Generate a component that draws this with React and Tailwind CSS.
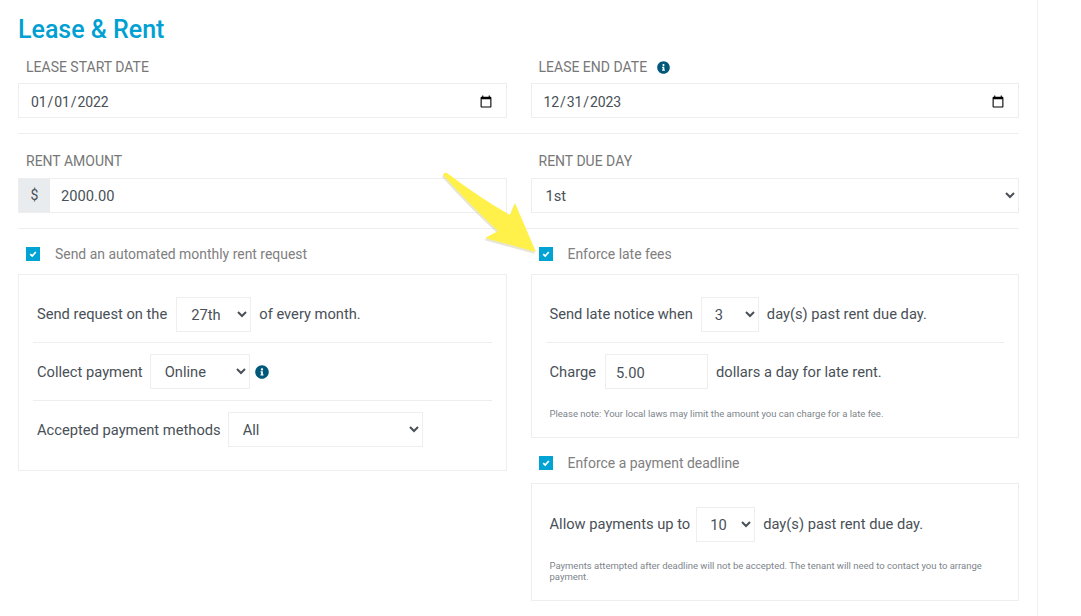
import { FaInfoCircle } from "react-icons/fa";

const boxBorder = "border border-[#eeeeee]";
const fieldText = "text-[14.7px] text-[#495057] bg-white";

function Label({ children }) {
  return <div className="h-[17px] pl-2 pt-px text-[14px] leading-[17px] text-[#777777]">{children}</div>;
}

function DateField({ value }) {
  return (
    <input
      type="date"
      defaultValue={value}
      className="mt-[8px] block h-[35px] w-full border border-[#eeeeee] bg-white pl-[11px] pr-[11px] pt-[3px] text-[14px] tracking-[-0.1px] text-[#495057] outline-none"
    />
  );
}

function Select({ options, className }) {
  return (
    <select className={`h-[35px] pt-px outline-none ${boxBorder} ${fieldText} ${className}`}>
      {options.map((o) => (
        <option key={o}>{o}</option>
      ))}
    </select>
  );
}

function Check({ label, className }) {
  return (
    <div className={`flex h-[20px] items-center pl-2 ${className}`}>
      <span className="flex h-[14px] w-[14px] items-center justify-center bg-[#00a3d3]">
        <svg viewBox="0 0 10 10" className="h-[8px] w-[8px]" fill="none" stroke="white" strokeWidth="2.2">
          <path d="M1.5 5.2 L4 7.5 L8.5 2.5" />
        </svg>
      </span>
      <span className="ml-[15px] pt-px text-[13.95px] text-[#808080]">{label}</span>
    </div>
  );
}

function Row({ children, className }) {
  return <div className={`flex h-[35px] items-center text-[14.7px] text-[#495057] ${className}`}>{children}</div>;
}

function Divider() {
  return <div className="h-px bg-[#eeeeee]" />;
}

function Note({ children }) {
  return <p className="px-1 text-[9.5px] leading-[11px] text-[#7d858c]">{children}</p>;
}

function Arrow() {
  return (
    <svg
      className="absolute left-0 top-0 pointer-events-none"
      width="1081"
      height="616"
      viewBox="0 0 1081 616"
    >
      <path
        d="M443 175 Q444 172 447 173 Q480 198 510 215 L515 203 L536 252 L485 238 L498 231 Q468 203 443 175 Z"
        fill="#c9c7a0"
        opacity="0.45"
        transform="translate(-1 2)"
      />
      <path
        d="M443 175 Q444 172 447 173 Q480 198 510 215 L515 203 L536 252 L485 238 L498 231 Q468 203 443 175 Z"
        fill="#fff14a"
      />
    </svg>
  );
}

export default function App() {
  return (
    <div className="relative h-[616px] w-[1081px] overflow-hidden bg-white font-['Roboto',sans-serif]">
      <div className="h-[616px] w-[1038px] border-r border-[#f0f0f0] pl-[18px] pr-[18px]">
        <h1 className="pt-[15px] text-[25px] font-medium leading-[29px] text-[#00a0d2]">Lease &amp; Rent</h1>

        <div className="mt-[14px] grid grid-cols-2 gap-x-6">
          <div>
            <Label>LEASE START DATE</Label>
            <DateField value="2022-01-01" />
          </div>
          <div>
            <Label>
              <span className="flex items-center gap-[10px]">
                LEASE END DATE <FaInfoCircle className="text-[13px] text-[#00587a]" />
              </span>
            </Label>
            <DateField value="2023-12-31" />
          </div>
        </div>

        <div className="mt-[15px]"><Divider /></div>

        <div className="mt-[18px] grid grid-cols-2 gap-x-6">
          <div>
            <Label>RENT AMOUNT</Label>
            <div className={`mt-[9px] flex h-[35px] ${boxBorder}`}>
              <span className="flex w-[31px] items-center justify-center bg-[#e9ecef] text-[14px] text-[#495057]">$</span>
              <input defaultValue="2000.00" className={`min-w-0 flex-1 pl-[11px] pt-[2px] outline-none ${fieldText}`} />
            </div>
          </div>
          <div>
            <Label>RENT DUE DAY</Label>
            <Select options={["1st"]} className="mt-[9px] block w-full pl-[10px]" />
          </div>
        </div>

        <div className="mt-[15px]"><Divider /></div>

        <div className="grid grid-cols-2 items-start gap-x-6">
          <div>
            <Check label="Send an automated monthly rent request" className="mt-[15px]" />
            <div className={`mt-[10px] h-[197px] px-[14px] pt-[22px] ${boxBorder}`}>
              <Row className="pl-1">
                Send request on the
                <Select options={["27th"]} className="ml-[9px] w-[75px] pl-[10px]" />
                <span className="ml-2">of every month.</span>
              </Row>
              <div className="mt-[10px]"><Divider /></div>
              <Row className="mt-[11px] pl-1">
                <span className="pt-[2px]">Collect payment</span>
                <Select options={["Online"]} className="ml-[7px] w-[100px] pl-[10px] pt-[3px]" />
                <FaInfoCircle className="ml-[5px] text-[14px] text-[#00587a]" />
              </Row>
              <div className="mt-[11px]"><Divider /></div>
              <Row className="mt-[11px] pl-1">
                <span className="pt-px">Accepted payment methods</span>
                <Select options={["All"]} className="ml-[7px] w-[195px] pl-[10px] pt-[3px]" />
              </Row>
            </div>
          </div>

          <div>
            <Check label="Enforce late fees" className="mt-[15px]" />
            <div className={`mt-[10px] h-[164px] px-[14px] pt-[22px] ${boxBorder}`}>
              <Row className="pl-1">
                Send late notice when
                <Select options={["3"]} className="ml-2 w-[58px] pl-[9px]" />
                <span className="ml-2">day(s) past rent due day.</span>
              </Row>
              <div className="mt-[10px]"><Divider /></div>
              <Row className="mt-[11px] pl-1">
                <span className="pt-px">Charge</span>
                <input defaultValue="5.00" className={`ml-[9px] h-[35px] w-[103px] pl-[10px] pt-[2px] outline-none ${boxBorder} ${fieldText}`} />
                <span className="ml-2 pt-px">dollars a day for late rent.</span>
              </Row>
              <div className="mt-[19px]">
                <Note>Please note: Your local laws may limit the amount you can charge for a late fee.</Note>
              </div>
            </div>

            <Check label="Enforce a payment deadline" className="mt-[15px]" />
            <div className={`mt-[10px] h-[118px] px-[14px] pt-[23px] ${boxBorder}`}>
              <Row className="pl-1">
                Allow payments up to
                <Select options={["10"]} className="ml-[6px] w-[59px] pl-[9px]" />
                <span className="ml-2">day(s) past rent due day.</span>
              </Row>
              <div className="mt-[18px]">
                <Note>
                  Payments attempted after deadline will not be accepted. The tenant will need to contact you to arrange
                  payment.
                </Note>
              </div>
            </div>
          </div>
        </div>
      </div>
      <Arrow />
    </div>
  );
}
